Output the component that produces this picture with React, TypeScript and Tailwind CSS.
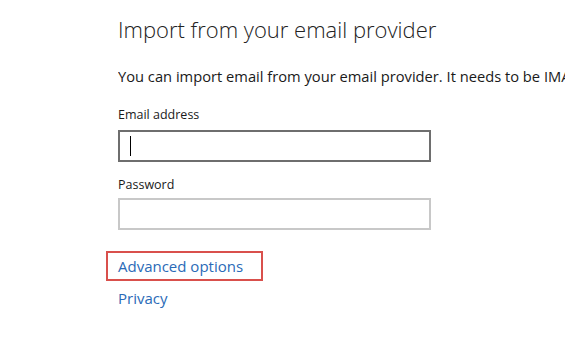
export default function App() {
  return (
    <div className="w-[565px] h-[351px] overflow-hidden bg-white font-['Open_Sans',sans-serif] text-[#1a1a1a]">
      <div className="pl-[118px] pt-[13px] flex flex-col">
        <h1 className="text-[22px] font-light leading-[32px] whitespace-nowrap text-[#222]">
          Import from your email provider
        </h1>
        <p className="mt-[21px] text-[14.7px] leading-[20px] whitespace-nowrap overflow-hidden">
          You can import email from your email provider. It needs to be IMAP-enabled.
        </p>
        <label className="mt-[21px] text-[12.5px] leading-[16px]">Email address</label>
        <div className="mt-[7px] w-[313px] h-[32px] border-2 border-[#6e6e6e] flex items-center pl-[10px]">
          <span className="w-px h-[20px] bg-black" />
        </div>
        <label className="mt-[15px] text-[12.5px] leading-[16px]">Password</label>
        <div className="mt-[5px] w-[313px] h-[32px] border-2 border-[#c8c8c8]" />
        <div className="mt-[21px] -ml-[12px] w-[157px] h-[30px] border-2 border-[#d9504c] flex items-center pl-[10px]">
          <a className="text-[15px] leading-[20px] text-[#2a6ab7] whitespace-nowrap">Advanced options</a>
        </div>
        <a className="mt-[7px] text-[15px] leading-[20px] text-[#2a6ab7]">Privacy</a>
      </div>
    </div>
  );
}
